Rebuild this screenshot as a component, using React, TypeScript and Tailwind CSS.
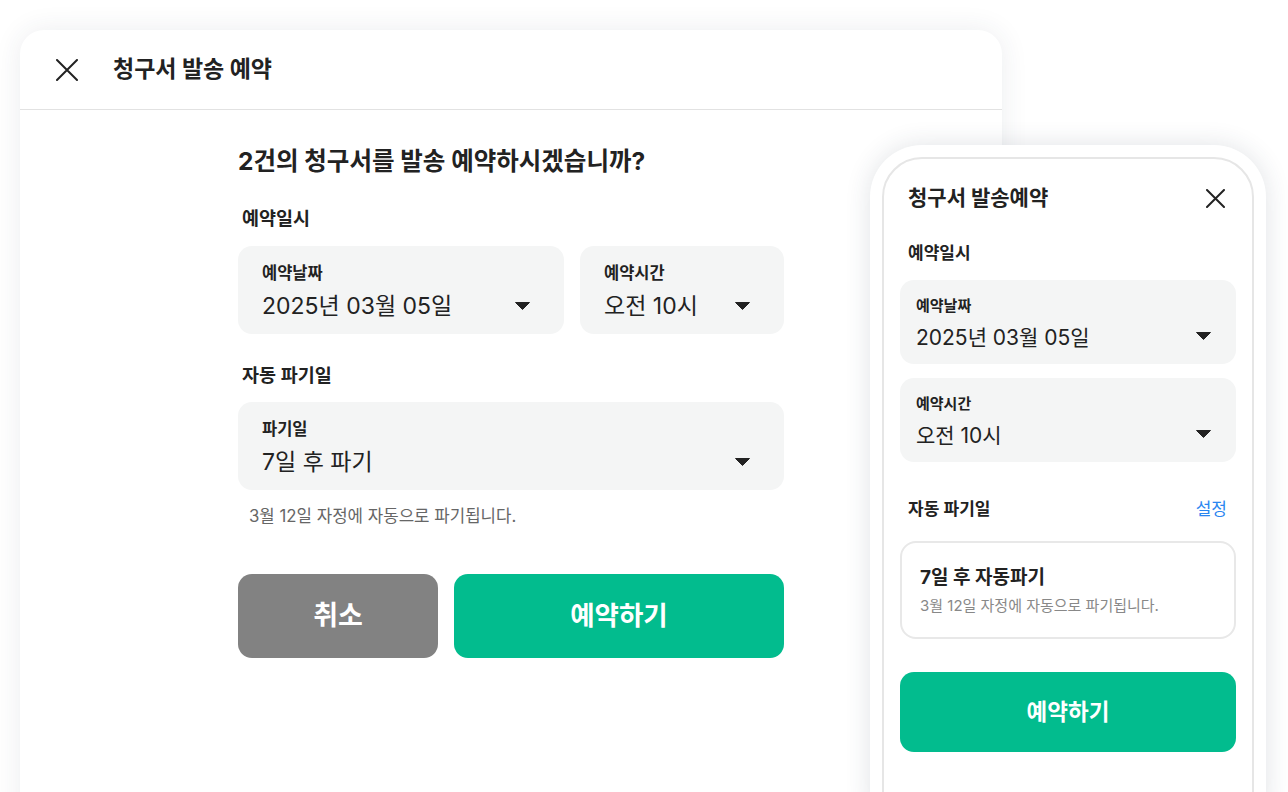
const font = { fontFamily: 'Inter, "Noto Sans CJK KR", sans-serif' };

function CloseIcon({ size }: { size: number }) {
  return (
    <svg width={size} height={size} viewBox={`0 0 ${size} ${size}`} fill="none">
      <path d={`M1 1L${size - 1} ${size - 1}M${size - 1} 1L1 ${size - 1}`} stroke="#222" strokeWidth="2" strokeLinecap="round" />
    </svg>
  );
}

function Caret({ className = '' }: { className?: string }) {
  return (
    <svg width="15" height="8" viewBox="0 0 15 8" className={className}>
      <path d="M0.5 0.5h14L7.5 7.5z" fill="#222" stroke="#222" strokeLinejoin="round" strokeWidth="1" />
    </svg>
  );
}

function SelectBox({ label, value, desktop }: { label: string; value: string; desktop?: boolean }) {
  if (desktop) {
    return (
      <div className="flex h-[88px] items-center justify-between rounded-[14px] bg-[#f4f5f5] pl-6 pr-[34px]">
        <div className="mt-1 flex flex-col">
          <span className="text-[16.5px] font-bold leading-5 text-[#222]">{label}</span>
          <span className="mt-2 text-[23px] leading-[30px] text-[#222]">{value}</span>
        </div>
        <Caret className="mt-[31px]" />
      </div>
    );
  }
  return (
    <div className="flex h-[84px] items-center justify-between rounded-[14px] bg-[#f4f5f5] pl-4 pr-[25px]">
      <div className="mt-1 flex flex-col">
        <span className="text-[15px] font-bold leading-5 text-[#222]">{label}</span>
        <span className="mt-2 text-[21px] leading-7 text-[#222]">{value}</span>
      </div>
      <Caret className="mt-[28px]" />
    </div>
  );
}

function DesktopModal() {
  return (
    <div className="ml-5 mt-[30px] h-[800px] w-[982px] rounded-[24px] bg-white shadow-[0_0_28px_rgba(40,55,80,0.09)]">
      <div className="flex h-[80px] items-center border-b border-[#e2e2e2] pl-9">
        <CloseIcon size={22} />
        <h1 className="ml-[35px] text-[23px] font-bold text-[#222]">청구서 발송 예약</h1>
      </div>
      <div className="ml-[218px] w-[546px]">
        <h2 className="mt-9 text-[24.5px] font-bold leading-[30px] text-[#222]">
          2건의 청구서를 발송 예약하시겠습니까?
        </h2>
        <p className="mt-[30px] pl-1 text-[18.5px] font-semibold leading-6 text-[#222]">예약일시</p>
        <div className="mt-4 grid grid-cols-[326px_204px] gap-4">
          <SelectBox desktop label="예약날짜" value="2025년 03월 05일" />
          <SelectBox desktop label="예약시간" value="오전 10시" />
        </div>
        <p className="mt-[29px] pl-1 text-[18.5px] font-semibold leading-6 text-[#222]">자동 파기일</p>
        <div className="mt-[15px]">
          <SelectBox desktop label="파기일" value="7일 후 파기" />
        </div>
        <p className="mt-4 pl-[11px] text-[16.8px] leading-5 text-[#666]">3월 12일 자정에 자동으로 파기됩니다.</p>
        <div className="mt-12 flex gap-4">
          <button className="h-[84px] w-[200px] rounded-[14px] bg-[#828282] text-[27px] font-bold text-white">취소</button>
          <button className="h-[84px] flex-1 rounded-[14px] bg-[#02bc8e] text-[26.5px] font-bold text-white">예약하기</button>
        </div>
      </div>
    </div>
  );
}

function PhoneModal() {
  return (
    <div className="absolute left-[870px] top-[145px] h-[700px] w-[396px] rounded-[52px] bg-white p-3 shadow-[0_0_26px_rgba(40,55,80,0.14)]">
      <div className="h-full rounded-[40px] border-2 border-[#e6e6e6] bg-white px-4 pt-[26px]">
        <div className="flex items-center justify-between pl-2 pr-[11px]">
          <h3 className="text-[21px] font-bold leading-[26px] text-[#222]">청구서 발송예약</h3>
          <CloseIcon size={19} />
        </div>
        <p className="mt-[31px] pl-2 text-[17px] font-semibold leading-[22px] text-[#222]">예약일시</p>
        <div className="mt-4 flex flex-col gap-[14px]">
          <SelectBox label="예약날짜" value="2025년 03월 05일" />
          <SelectBox label="예약시간" value="오전 10시" />
        </div>
        <div className="mt-9 flex items-center justify-between pl-2 pr-[9px]">
          <span className="text-[17px] font-semibold leading-[22px] text-[#222]">자동 파기일</span>
          <span className="text-[17px] leading-[22px] text-[#2b86f0]">설정</span>
        </div>
        <div className="mt-[21px] h-[98px] rounded-[16px] border-2 border-[#e8e8e8] px-[18px] pt-[23px]">
          <p className="text-[19px] font-bold leading-6 text-[#222]">7일 후 자동파기</p>
          <p className="mt-[6px] text-[15px] leading-5 text-[#888]">3월 12일 자정에 자동으로 파기됩니다.</p>
        </div>
        <button className="mt-[33px] h-[80px] w-full rounded-[14px] bg-[#02bc8e] text-[22.5px] font-bold text-white">
          예약하기
        </button>
      </div>
    </div>
  );
}

export default function App() {
  return (
    <div className="relative h-[792px] w-[1288px] overflow-hidden bg-white" style={font}>
      <div className="-mt-px pt-px">
        <DesktopModal />
      </div>
      <PhoneModal />
    </div>
  );
}
